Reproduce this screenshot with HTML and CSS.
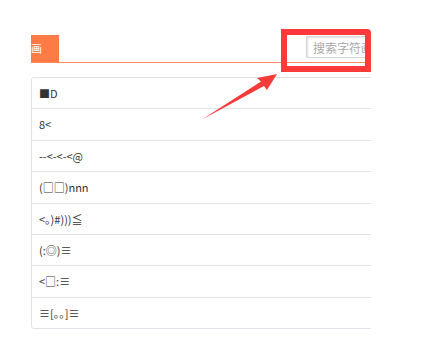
FILE: index.html
```html
<!DOCTYPE html>
<html lang="zh">
<head>
<meta charset="utf-8">
<title>字符画</title>
<link rel="stylesheet" href="styles.css">
</head>
<body>
<div class="page">
  <div class="header">
    <div class="tab"><span>画</span></div>
    <input class="search" type="text" placeholder="搜索字符画">
  </div>
  <div class="table">
    <div class="row">■D</div>
    <div class="row">8&lt;</div>
    <div class="row">--&lt;-&lt;-&lt;@</div>
    <div class="row">(□□)nnn</div>
    <div class="row">&lt;。)#)))≦</div>
    <div class="row">(:◎)≡</div>
    <div class="row">&lt;□:≡</div>
    <div class="row">≡[。。]≡</div>
  </div>
</div>
<div class="highlight"></div>
<svg class="arrow" width="421" height="354" viewBox="0 0 421 354">
  <polygon points="202,119.5 261,81.5 257,78 277,74 267,90 264,86" fill="#f73b3b"/>
</svg>
</body>
</html>
```
FILE: styles.css
```css
html, body {
  margin: 0;
  padding: 0;
  background: #ffffff;
}
body {
  width: 421px;
  height: 354px;
  position: relative;
  overflow: hidden;
  font-family: "Noto Sans CJK SC", "DejaVu Sans", sans-serif;
}
.page {
  margin-left: 31px;
  padding-top: 35px;
  width: 340px;
  overflow: hidden;
}
.header {
  display: flex;
  justify-content: space-between;
  align-items: flex-start;
  height: 27px;
  border-bottom: 1px solid #ff8a5c;
}
.tab {
  width: 28px;
  height: 27px;
  background: #ff7b45;
  color: #ffffff;
  font-family: "Noto Sans CJK SC", sans-serif;
  font-size: 11px;
  line-height: 27px;
  padding-left: 0;
  box-sizing: border-box;
  white-space: nowrap;
}
.search {
  margin-top: 1px;
  margin-right: -40px;
  width: 105px;
  height: 22px;
  box-sizing: border-box;
  border: 1px solid #d6d6d6;
  box-shadow: inset 1px 1px 2px rgba(0,0,0,0.12);
  padding: 0 6px;
  font-family: "Noto Sans CJK SC", sans-serif;
  font-size: 12px;
  outline: none;
}
.search::placeholder {
  color: #a9a9a9;
}
.table {
  margin-top: 14px;
  width: 400px;
  border: 1px solid #dfe3e8;
  border-radius: 3px;
}
.row {
  height: 30.4px;
  line-height: 30px;
  padding-left: 7px;
  font-family: "Noto Sans CJK SC", "DejaVu Sans", sans-serif;
  font-size: 11px;
  color: #333333;
  border-top: 1px solid #dfe3e8;
  white-space: nowrap;
}
.row:first-child {
  border-top: none;
}
.highlight {
  position: absolute;
  left: 281px;
  top: 29px;
  width: 90px;
  height: 43px;
  box-sizing: border-box;
  border: 6px solid #fc3a3a;
  border-top-right-radius: 4px;
}
.arrow {
  position: absolute;
  left: 0;
  top: 0;
}
```
